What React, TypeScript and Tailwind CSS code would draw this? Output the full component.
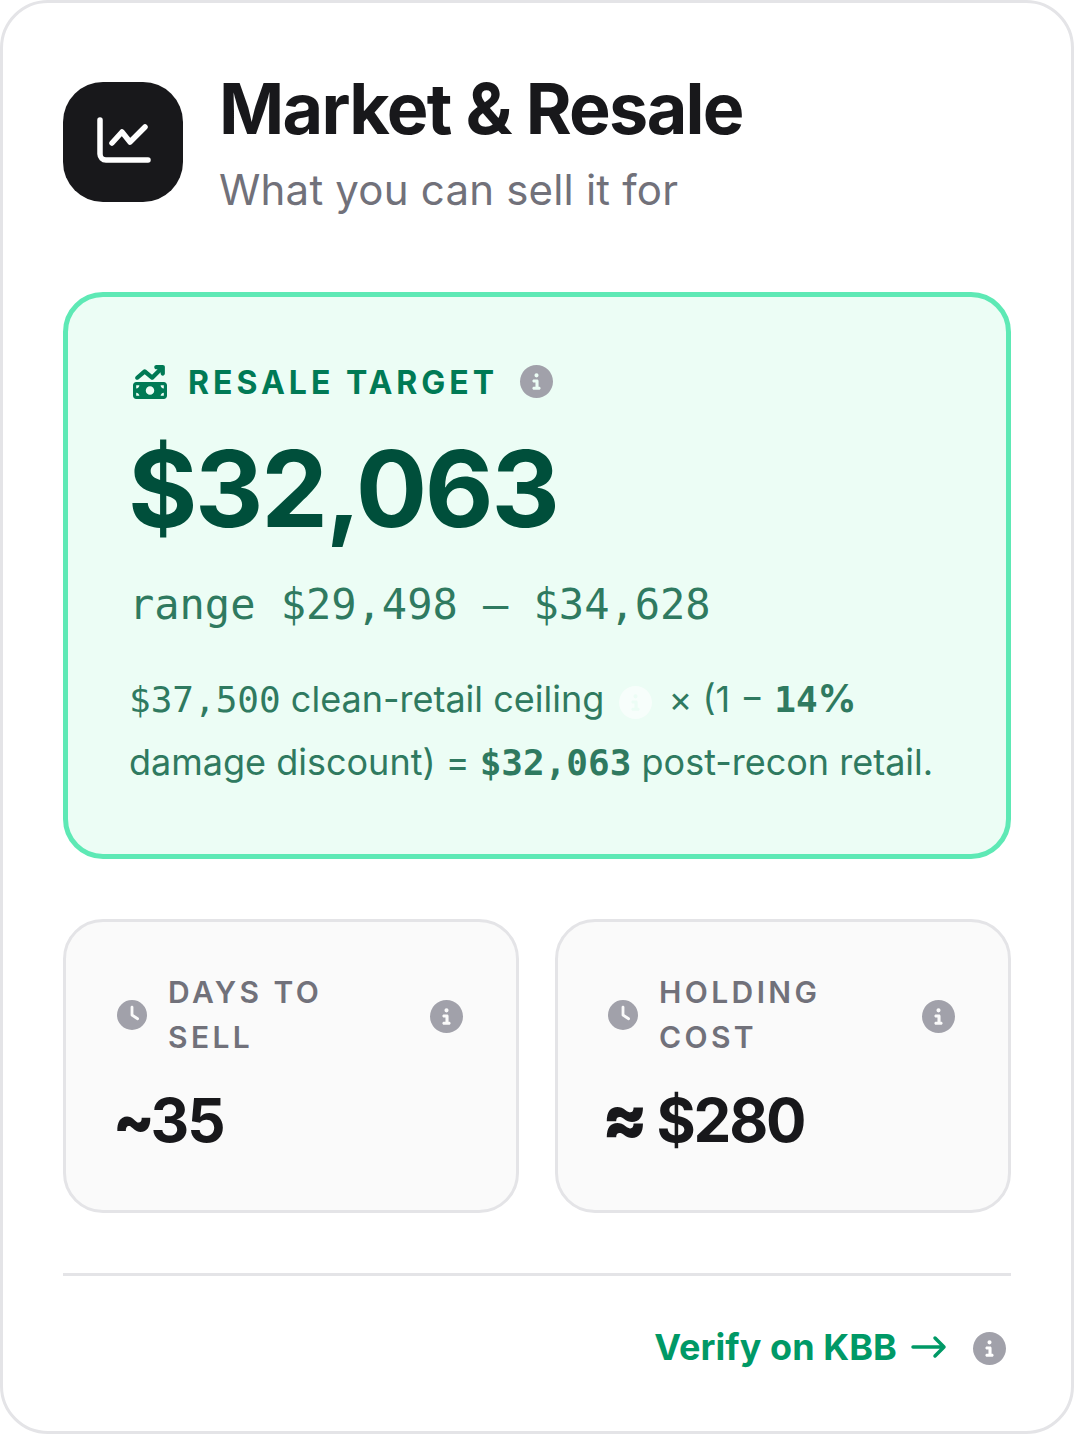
import React from "react";
import { FaCircleInfo, FaClock, FaMoneyBillTrendUp } from "react-icons/fa6";

const InfoIcon = ({ className }: { className: string }) => (
  <FaCircleInfo className={`shrink-0 text-[#a1a1aa] ${className}`} />
);

const Stat = ({ label, second, prefix, value, pad }: { label: string; second: string; prefix: React.ReactNode; value: string; pad: string }) => (
  <div className={`h-[294px] rounded-[40px] border-[3px] border-[#e4e4e7] bg-[#fafafa] pt-[48px] ${pad}`}>
    <div className="flex items-center">
      <FaClock className="w-[30px] h-[30px] shrink-0 text-[#a1a1aa]" />
      <div className="ml-[21px] flex-1 text-[30px] leading-[45px] font-semibold tracking-[3.4px] text-[#71717a]">
        <div>{label}</div>
        <div>{second}</div>
      </div>
      <InfoIcon className="mt-[2px] w-[33px] h-[33px]" />
    </div>
    <div className="mt-[20px] -ml-[3px] text-[60px] leading-[80px] font-bold tracking-[-2.2px] text-[#18181b]">
      {prefix}
      {value}
    </div>
  </div>
);

export default function App() {
  return (
    <div className="w-[1074px] h-[1434px] bg-white font-['Inter',sans-serif]">
      <div className="h-full rounded-[48px] border-[3px] border-[#e4e4e7] px-[60px] pt-[79px]">
        <div className="flex gap-[36px]">
          <div className="w-[120px] h-[120px] rounded-[40px] bg-[#18181b] flex items-center justify-center shrink-0">
            <svg width="60" height="60" viewBox="0 0 60 60" fill="none" stroke="white" strokeWidth="5.5" strokeLinecap="round" strokeLinejoin="round">
              <path d="M7 8v34a6 6 0 0 0 6 6h42" />
              <path d="M19 31l10-11 8 10 15-15" />
            </svg>
          </div>
          <div>
            <h1 className="-mt-[1px] text-[70px] leading-[56px] font-bold tracking-[-1.7px] text-[#18181b]">Market &amp; Resale</h1>
            <p className="mt-[28px] text-[42px] leading-[50px] tracking-[0.2px] text-[#71717a]">What you can sell it for</p>
          </div>
        </div>

        <div className="mt-[77px] h-[567px] rounded-[40px] border-[5px] border-[#5ee9b5] bg-[#ecfdf5] pl-[61px] pr-[60px] pt-[61px]">
          <div className="flex items-center">
            <FaMoneyBillTrendUp className="ml-[4px] w-[34px] h-[34px] text-[#007a55]" />
            <span className="ml-[21px] mt-[3px] text-[32px] leading-[44px] font-bold tracking-[4px] text-[#007a55]">RESALE TARGET</span>
            <InfoIcon className="ml-[22px] w-[33px] h-[33px]" />
          </div>
          <div className="mt-[24px] -ml-[1px] text-[106px] leading-[120px] font-bold tracking-[-2.3px] text-[#004f3b]">$32,063</div>
          <div className="mt-[28px] font-['DejaVu_Sans_Mono',monospace] text-[42px] leading-[56px] text-[#2f7a60]">range $29,498 – $34,628</div>
          <p className="mt-[34px] text-[36px] leading-[63px] text-[#2f7a60]">
            <span className="font-['DejaVu_Sans_Mono',monospace]">$37,500</span> clean-retail ceiling{" "}
            <FaCircleInfo className="inline-block ml-[5px] mr-[6px] w-[33px] h-[33px] text-white opacity-60 align-[-7px]" /> × (1 − <span className="font-['DejaVu_Sans_Mono',monospace] font-bold">14</span><span className="font-bold text-[38px]">%</span> damage discount) = <span className="font-['DejaVu_Sans_Mono',monospace] font-bold">$32,063</span> post-recon retail.
          </p>
        </div>

        <div className="mt-[60px] grid grid-cols-2 gap-[36px]">
          <Stat label="DAYS TO" second="SELL" prefix={<span className="-ml-[1px] font-black tracking-[-4px]">~</span>} value="35" pad="pl-[51px] pr-[53px]" />
          <Stat label="HOLDING" second="COST" prefix={<span className="-ml-[3px] font-black text-[66px] leading-[60px]">≈ </span>} value="$280" pad="pl-[50px] pr-[53px]" />
        </div>

        <div className="mt-[60px] border-t-[3px] border-[#e4e4e7]" />

        <div className="mt-[47px] pr-[5px] flex items-center justify-end">
          <span className="text-[36px] leading-[48px] font-bold tracking-[0.07px] text-[#009966]">Verify on KBB</span>
          <svg className="ml-[14px]" width="36" height="24" viewBox="0 0 36 24" fill="none" stroke="#009966" strokeWidth="3.5" strokeLinecap="round" strokeLinejoin="round">
            <path d="M2 12h31M24 3l9 9-9 9" />
          </svg>
          <InfoIcon className="ml-[26px] mt-[3px] w-[33px] h-[33px]" />
        </div>
      </div>
    </div>
  );
}
